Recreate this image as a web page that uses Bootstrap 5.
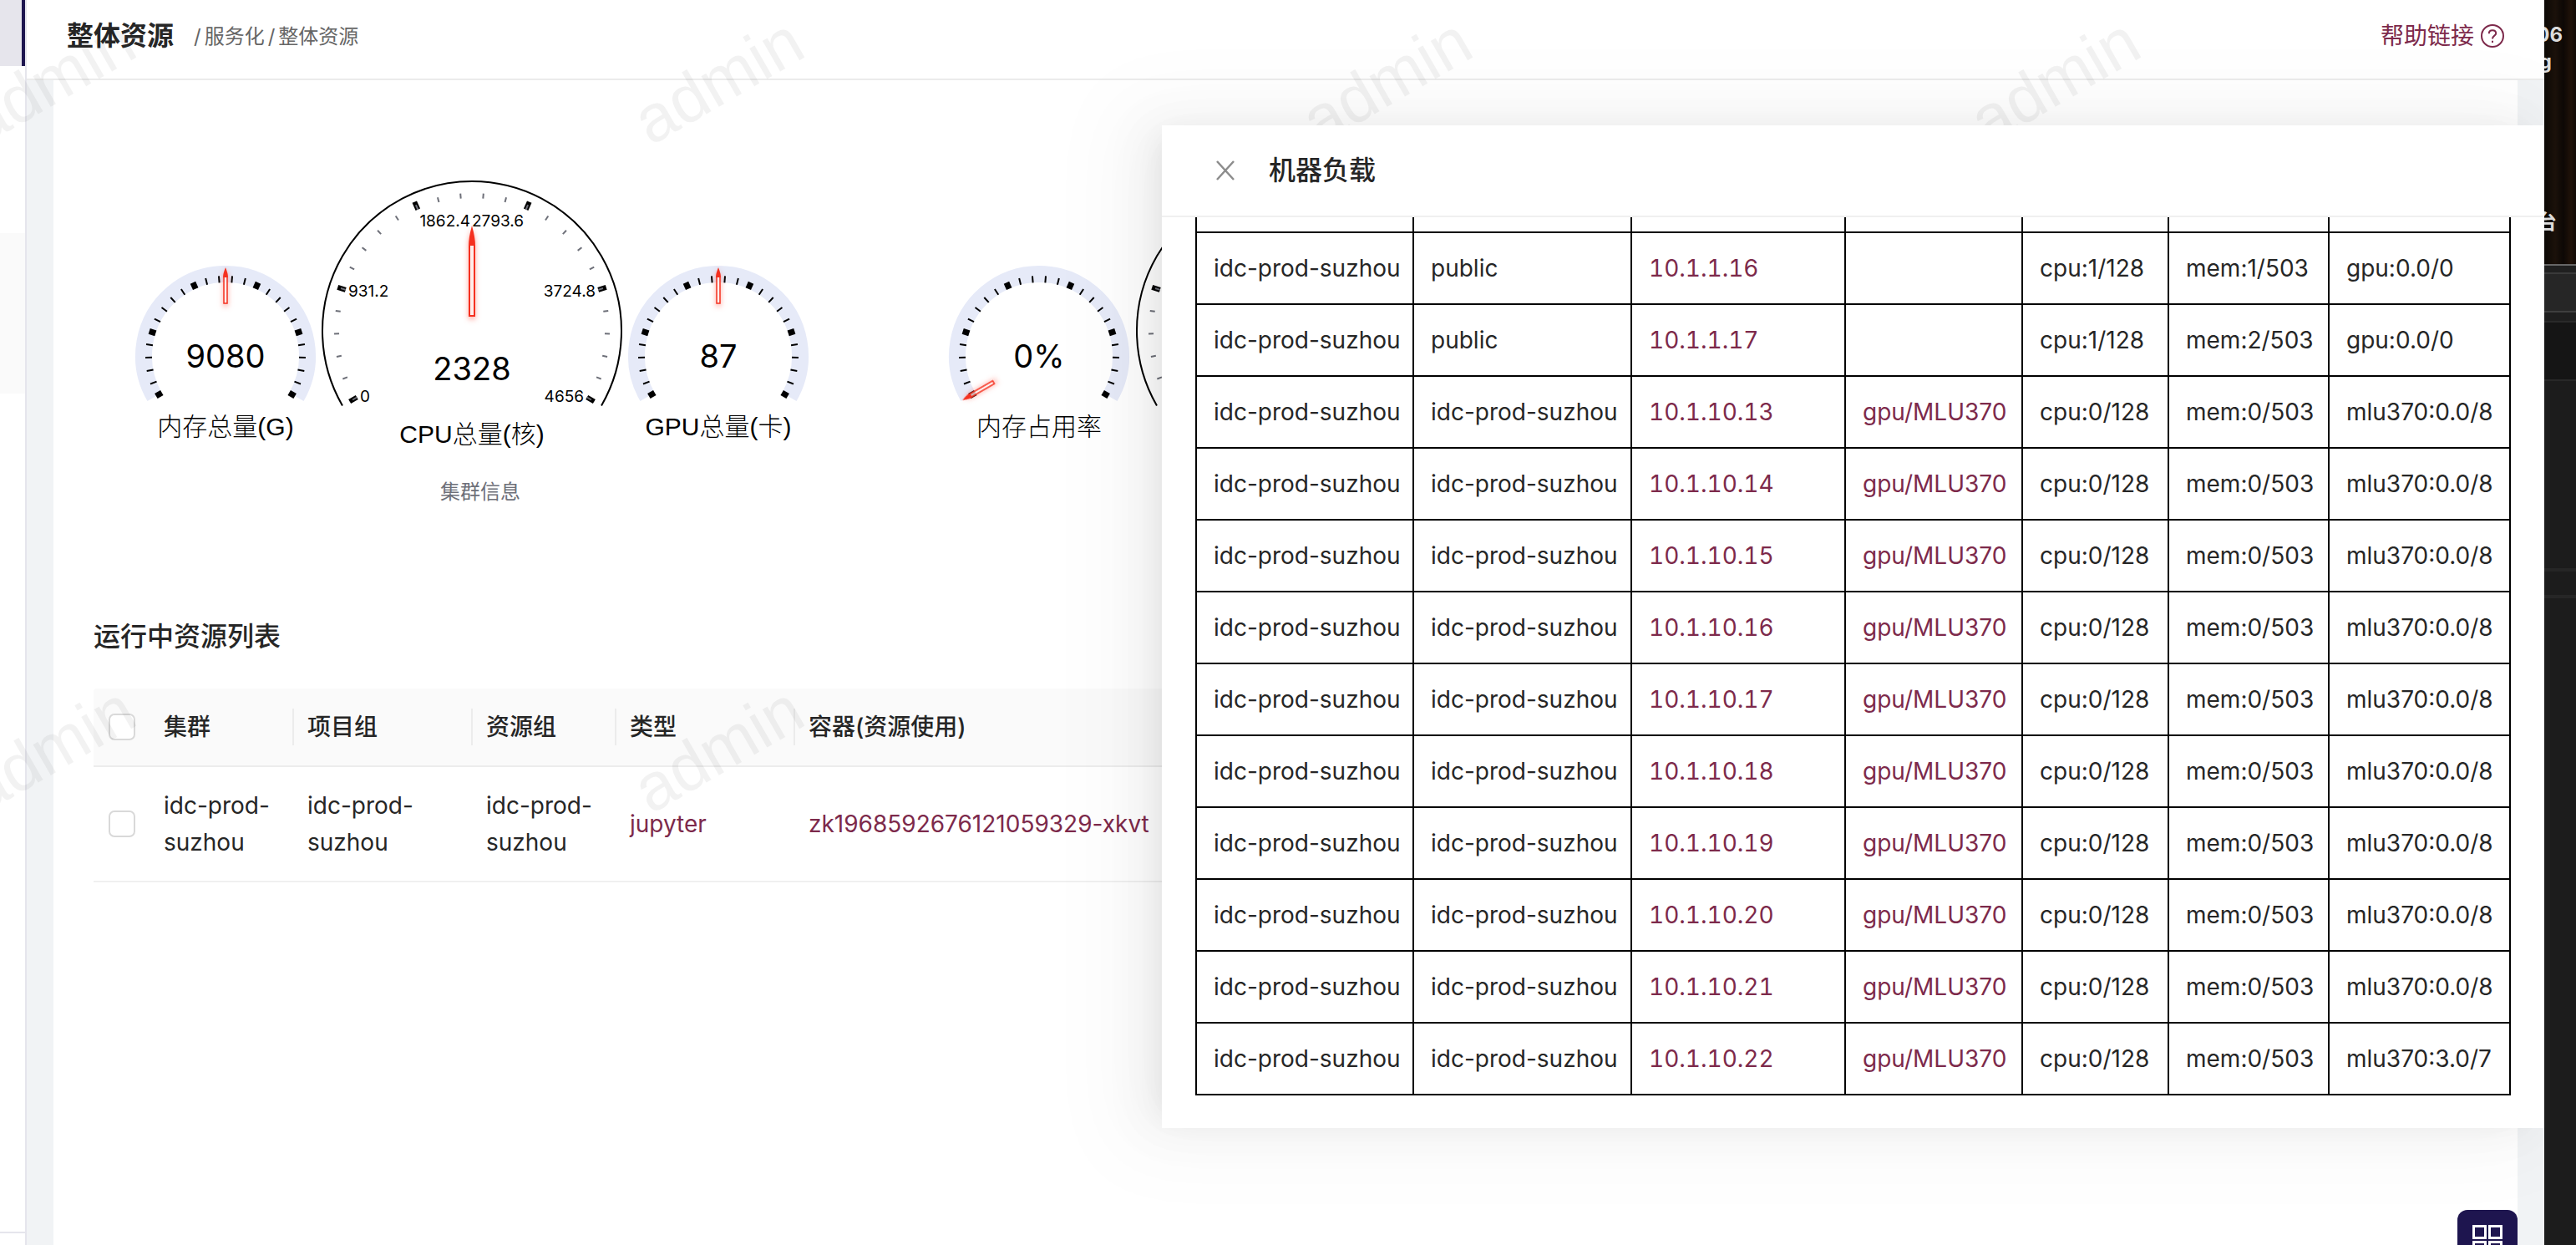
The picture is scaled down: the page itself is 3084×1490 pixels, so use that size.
<!DOCTYPE html>
<html lang="zh-CN">
<head>
<meta charset="utf-8">
<meta name="viewport" content="width=device-width, initial-scale=1">
<title>整体资源</title>
<link href="https://cdn.jsdelivr.net/npm/bootstrap@5.3.0/dist/css/bootstrap.min.css" rel="stylesheet">
<style>
  body { font-family: Inter, "Noto Sans CJK SC", sans-serif; font-size: 28px; line-height: 44px; color: #262626; background: #1c1c1c; }
  a { color: #7d2a4b; text-decoration: none; }
  a:hover { color: #a3446a; }
  .app-window { background: #f1f3f5; }
  .side-rail { width: 32px; border-right: 2px solid #e5e5ec; background: #fff; }
  .side-active { height: 79px; background: #e6e5ec; border-right: 4px solid #1e154f; }
  .side-group { height: 192px; margin-top: 200px; background: #fafafa; }
  .side-foot { height: 16px; border-top: 2px solid #e5e5ec; }
  .top-bar { height: 96px; padding: 0 48px; padding-bottom: 8px; border-bottom: 2px solid #ebebeb; background: #fff; }
  .page-name { font-size: 32px; font-weight: 700; }
  .crumbs { font-size: 24px; color: #666; padding-top: 2px; }
  .content-card { margin: 0 32px; background: #fff; }
  .gauge-row { padding: 0 14px; height: 616px; }
  .section-name { font-size: 32px; font-weight: 500; margin: 28px 48px 40px; line-height: 44px; }
  .run-table { margin: 0 48px; table-layout: fixed; width: calc(100% - 96px); border-collapse: separate; border-spacing: 0; }
  .run-table th { height: 94px; padding: 0 16px; font-weight: 500; background: #fafafa; border-bottom: 2px solid #ececec; position: relative; }
  .run-table th:first-child { border-top-left-radius: 4px; }
  .run-table th:not(:first-child):not(:last-child)::after { content: ""; position: absolute; right: 0; top: 24px; height: 44px; width: 2px; background: #ececec; }
  .run-table td { height: 138px; padding: 0 16px; border-bottom: 2px solid #f0f0f0; }
  .tick-box { display: block; width: 32px; height: 32px; margin: 0 0 0 2px; border: 2px solid #d9d9d9; border-radius: 4px; }
  .load-drawer { top: 150px; right: 0; width: 1655px; height: 1200px; background: #fff; z-index: 3;
    box-shadow: -12px 0 32px -16px rgba(0,0,0,.08), -18px 0 56px 0 rgba(0,0,0,.05), -24px 0 96px 32px rgba(0,0,0,.03); }
  .drawer-top { height: 110px; padding: 0 64px; border-bottom: 2px solid #f0f0f0; }
  .drawer-name { font-size: 32px; font-weight: 500; margin-left: 40px; }
  .drawer-main { padding: 0 40px 39px; min-height: 0; }
  .load-table { width: 100%; table-layout: fixed; border-collapse: collapse; }
  .load-table td { height: 86px; padding: 0 0 0 20px; border: 2px solid #000; white-space: nowrap; }
  .load-table td:nth-child(3) { font-variant-numeric: tabular-nums; }
  .mark-layer { z-index: 2; pointer-events: none; }
  .apps-btn { right: 32px; top: 1448px; width: 72px; height: 72px; border-radius: 12px; background: #1e154f; z-index: 1; }
  .desk-strip { width: 38px; color: #dcdcdc; font-size: 24px; font-weight: 700; background: #1c1c1c; }
  .desk-wood { height: 316px; padding-top: 26px; line-height: 32px; background: linear-gradient(90deg, #0c0905, #1b110a 35%, #0d0805 60%, #201209 85%, #120a06); }
  .desk-wood div { padding-right: 16px; }
  .desk-wood .d2 { padding-right: 29px; }
  .desk-wood .d3 { padding-right: 23px; margin-top: 160px; }
  .desk-bars { height: 400px; background: linear-gradient(#666 0 2px, #202020 2px 10px, #3a3a3a 10px 12px, #262626 12px 56px, #3e3e3e 56px 58px, #1e1e1e 58px 68px, #2a2a2a 68px 70px, #151515 70px 138px, #282828 138px 140px, #1c1c1c 140px 364px, #262626 364px 368px, #1c1c1c 368px 396px, #262626 396px); }
  svg text { font-family: Inter, "Noto Sans CJK SC", sans-serif; }
  .g-name { font-size: 30px; font-weight: 300; }
  .g-name .en { font-family: "Liberation Sans", sans-serif; font-weight: 400; }
</style>
<script src="https://cdn.jsdelivr.net/npm/bootstrap@5.3.0/dist/js/bootstrap.bundle.min.js"></script>
</head>
<body class="vh-100 overflow-hidden d-flex">
<div class="app-window position-relative flex-grow-1 d-flex overflow-hidden">
  <aside class="side-rail flex-shrink-0 d-flex flex-column">
    <div class="side-active"></div>
    <div class="side-group"></div>
    <div class="side-foot mt-auto"></div>
  </aside>
  <div class="flex-grow-1 d-flex flex-column">
    <header class="top-bar d-flex align-items-center flex-shrink-0">
      <h1 class="page-name mb-0">整体资源</h1>
      <nav class="crumbs ms-4 d-flex gap-1" aria-label="breadcrumb"><span>/</span><span>服务化</span><span>/</span><span>整体资源</span></nav>
      <a class="ms-auto d-flex align-items-center gap-2" href="#">帮助链接
        <svg width="28" height="28" viewBox="0 0 28 28" fill="none" stroke="currentColor" stroke-width="2"><circle cx="14" cy="14" r="13"/><path d="M9.800 11.200C9.800 8.700 11.600 7.300 14 7.300S18.200 8.700 18.200 11C18.200 13.800 14 13.600 14 17.500"/><path d="M14 19.700v2.300"/></svg>
      </a>
    </header>
    <main class="content-card flex-grow-1">
      <div class="gauge-row row g-0">
        <div class="col-4"><svg class="gauge-svg d-block w-100" viewBox="0 0 974 616" data-set="info"></svg></div>
        <div class="col-4"><svg class="gauge-svg d-block w-100" viewBox="0 0 974 616" data-set="usage"></svg></div>
      </div>
      <h2 class="section-name">运行中资源列表</h2>
      <table class="run-table">
        <colgroup><col style="width:68px"><col style="width:172px"><col style="width:214px"><col style="width:172px"><col style="width:214px"><col></colgroup>
        <thead><tr>
          <th><input class="form-check-input tick-box" type="checkbox" aria-label="全选"></th>
          <th>集群</th><th>项目组</th><th>资源组</th><th>类型</th><th>容器(资源使用)</th>
        </tr></thead>
        <tbody><tr>
          <td><input class="form-check-input tick-box" type="checkbox" aria-label="选择此行"></td>
          <td>idc-prod-suzhou</td><td>idc-prod-suzhou</td><td>idc-prod-suzhou</td>
          <td><a href="#">jupyter</a></td><td><a href="#">zk1968592676121059329-xkvt</a></td>
        </tr></tbody>
      </table>
    </main>
  </div>

  <button class="apps-btn btn position-absolute p-0 border-0 d-flex justify-content-center align-items-center" type="button" aria-label="应用">
    <svg width="36" height="36" viewBox="0 0 36 36" fill="none" stroke="#fff" stroke-width="3"><path d="M1.500 1.500h14v14h-14zM20.500 1.500h14v14h-14zM1.500 20.500h14v14h-14zM20.500 20.500h14v14h-14z"/></svg>
  </button>

  <svg class="mark-layer position-absolute top-0 start-0 w-100 h-100">
    <defs><pattern id="mark" x="-60" y="0" width="800" height="800" patternUnits="userSpaceOnUse">
      <text transform="translate(39 175) rotate(-30)" style="font-family:'Liberation Sans',sans-serif" font-size="80" fill="#000" fill-opacity=".05">admin</text>
    </pattern></defs>
    <rect width="100%" height="100%" fill="url(#mark)"/>
  </svg>

  <section class="load-drawer position-absolute d-flex flex-column">
    <div class="drawer-top d-flex align-items-center flex-shrink-0">
      <button class="btn p-0 border-0 d-flex" type="button" aria-label="关闭"><svg width="24" height="26" viewBox="0 0 24 26" stroke="#8c8c8c" stroke-width="2.500"><path d="M2 2L22 24M22 2L2 24"/></svg></button>
      <h2 class="drawer-name mb-0">机器负载</h2>
    </div>
    <div class="drawer-main flex-grow-1 d-flex flex-column justify-content-end overflow-hidden">
      <table class="load-table flex-shrink-0">
        <colgroup><col style="width:260px"><col style="width:261px"><col style="width:256px"><col style="width:212px"><col style="width:175px"><col style="width:192px"><col></colgroup>
        <tbody id="loads"></tbody>
      </table>
    </div>
  </section>
</div>
<aside class="desk-strip flex-shrink-0 overflow-hidden">
  <div class="desk-wood">
    <div class="d-flex justify-content-end">06</div>
    <div class="d2 d-flex justify-content-end">g</div>
    <div class="d3 d-flex justify-content-end">台</div>
  </div>
  <div class="desk-bars"></div>
</aside>
<script>
  // Machine load rows: cluster, group, address, device, cpu, memory, accelerator
  const c = 'idc-prod-suzhou';
  const rows = [['', '', '', '', '', '', ''],
    [c, 'public', '10.1.1.16', '', 'cpu:1/128', 'mem:1/503', 'gpu:0.0/0'],
    [c, 'public', '10.1.1.17', '', 'cpu:1/128', 'mem:2/503', 'gpu:0.0/0']];
  for (let i = 13; i <= 22; i++) rows.push([c, c, '10.1.10.' + i, 'gpu/MLU370', 'cpu:0/128', 'mem:0/503', i === 22 ? 'mlu370:3.0/7' : 'mlu370:0.0/8']);
  document.getElementById('loads').innerHTML = rows.map(r => '<tr>' + r.map((t, i) =>
    '<td>' + (t && (i === 2 || i === 3) ? '<a href="#">' + t + '</a>' : t) + '</td>').join('') + '</tr>').join('');

  // Gauges sweep 240 degrees, from 210 down to -30, in 5 splits of 5 ticks
  const at = (cx, cy, r, deg) => [cx + r * Math.cos(deg * Math.PI / 180), cy - r * Math.sin(deg * Math.PI / 180)].map(v => v.toFixed(2)).join(' ');
  const line = (cx, cy, r1, r2, d, w, col) => `<path d="M${at(cx, cy, r1, d)}L${at(cx, cy, r2, d)}" stroke="${col}" stroke-width="${w}"/>`;
  const arc = (cx, cy, r, w, col) => `<path d="M${at(cx, cy, r, 210)}A${r} ${r} 0 1 1 ${at(cx, cy, r, -30)}" fill="none" stroke="${col}" stroke-width="${w}"/>`;
  const label = (x, y, s, t, a = 'middle') => `<text x="${x}" y="${y}" font-size="${s}" text-anchor="${a}">${t}</text>`;
  const name = (x, y, t) => `<text class="g-name" x="${x}" y="${y}" text-anchor="middle">${t.replace(/[A-Z()]+/g, m => `<tspan class="en">${m}</tspan>`)}</text>`;
  const needle = (cx, cy, tip, end, head, half, p) => `<g transform="rotate(${p * 240 - 120} ${cx} ${cy})" style="filter:drop-shadow(0 3px 3px rgba(255,60,40,.5))">
    <path d="M${cx - half + 1} ${cy - tip + head}V${cy - end}H${cx + half - 1}V${cy - tip + head}" fill="#fff" fill-opacity=".7" stroke="#f5301f" stroke-width="${half > 3 ? 2 : 1.5}"/>
    <path d="M${cx} ${cy - tip}Q${cx + half} ${cy - tip + head * .6} ${cx + half} ${cy - tip + head}H${cx - half}Q${cx - half} ${cy - tip + head * .6} ${cx} ${cy - tip}Z" fill="#f5301f"/></g>`;
  function small(cx, val, title, p) {
    const cy = 330; let s = arc(cx, cy, 98, 20, '#e6eaf8');
    for (let i = 0; i <= 25; i++) s += line(cx, cy, 88, 96, 210 - i * 9.6, i % 5 ? 2 : 7, '#000');
    return s + needle(cx, cy, 106, 63, 12, 3, p) + label(cx, 344, 38, val) + name(cx, 425, title);
  }
  function big(cx, val, title, marks, p) {
    const cy = 300; let s = arc(cx, cy, 179, 2, '#000');
    for (let i = 0; i <= 25; i++) {
      if (i % 5 === 0) s += line(cx, cy, 159, 169, 210 - i * 9.6, 6, '#000');
      s += line(cx, cy, 159, 165, 210 - i * 9.6, 2, '#6e7079');
    }
    s += label(cx - 134, 385, 19, marks[0], 'start') + label(cx - 148, 259, 19, marks[1], 'start')
      + label(cx - 2, 175, 19, marks[2], 'end') + label(cx, 175, 19, marks[3], 'start')
      + label(cx + 148, 259, 19, marks[4], 'end') + label(cx + 134, 385, 19, marks[5], 'end');
    return s + needle(cx, cy, 126, 18, 24, 4, p) + label(cx, 359, 38, val) + name(cx, 434, title);
  }
  const sets = {
    info: () => small(192, '9080', '内存总量(G)', .5) + big(487, '2328', 'CPU总量(核)', [0, 931.2, 1862.4, 2793.6, 3724.8, 4656], .5)
      + small(782, '87', 'GPU总量(卡)', .5) + '<text x="497" y="501" font-size="24" text-anchor="middle" fill="#6e7079">集群信息</text>',
    usage: () => small(192, '0%', '内存占用率', 0) + big(488, '0%', 'CPU占用率', ['', '', '', '', '', ''], 0.5)
  };
  document.querySelectorAll('.gauge-svg').forEach(e => e.innerHTML = sets[e.dataset.set]());
</script>
</body>
</html>
